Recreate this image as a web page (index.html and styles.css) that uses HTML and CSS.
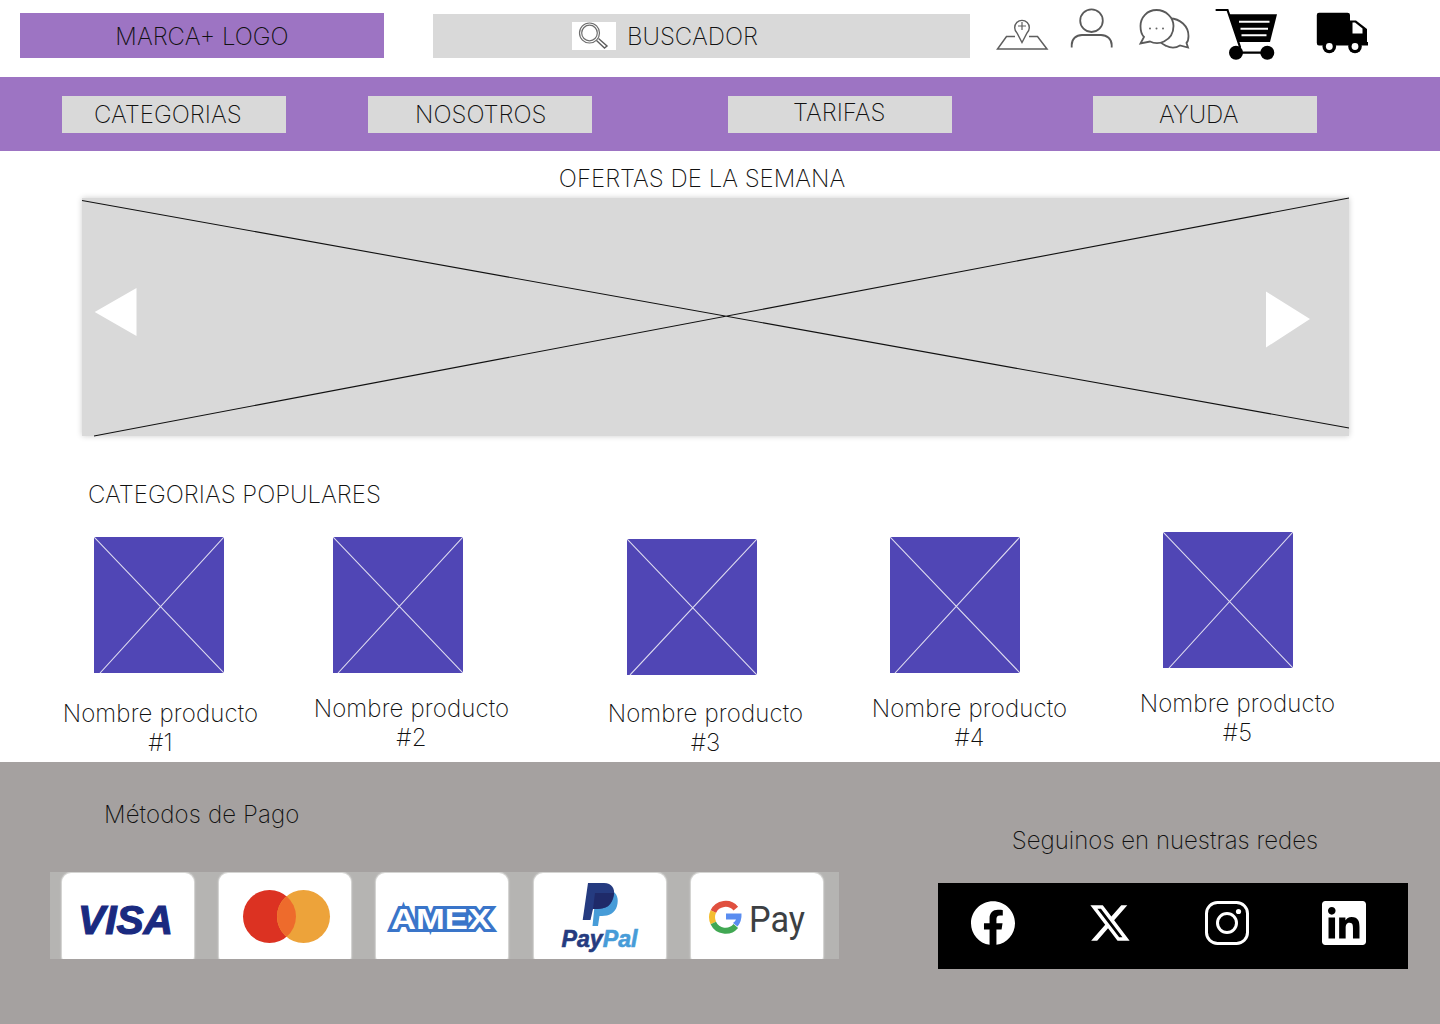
FILE: index.html
```html
<!DOCTYPE html>
<html lang="es">
<head>
<meta charset="utf-8">
<title>Tienda</title>
<link rel="stylesheet" href="styles.css">
</head>
<body>
<header class="header">
  <div class="brand">MARCA+ LOGO</div>
  <div class="search">
    <span class="search-icon">
      <svg width="44" height="28" viewBox="572 22 44 28" class="line-icon">
        <circle cx="589.5" cy="33" r="10" fill="none" stroke="#6e6e6e" stroke-width="1.2"/>
        <circle cx="589.5" cy="33" r="7.800" fill="none" stroke="#6e6e6e" stroke-width="1.200"/>
        <path d="M596.500 40.500 L604.500 48 L607 46 L598.500 38.500" fill="none" stroke="#5e5e5e" stroke-width="1.400"/>
      </svg>
    </span>
    <span class="search-label">BUSCADOR</span>
  </div>
  <div class="tools">
    <svg class="tool tool-map" viewBox="990 0 70 77">
      <path d="M1015 36.500 H1006.500 L997.500 49 H1047 L1037.500 36.500 H1029" fill="none" stroke="#5e5e5e" stroke-width="1.500"/>
      <path d="M1017 33 A7.300 7.300 0 1 1 1027 33 L1022 42.500 Z" fill="#fff" stroke="#5e5e5e" stroke-width="1.400"/>
      <path d="M1022 22 V30 M1018 26 H1026" stroke="#5e5e5e" stroke-width="1.200"/>
    </svg>
    <svg class="tool tool-person" viewBox="1060 0 70 77">
      <circle cx="1091.500" cy="20.700" r="11.300" fill="none" stroke="#5a5a5a" stroke-width="1.800"/>
      <path d="M1071.700 47.500 V45 C1071.700 39 1076 35 1082 35 H1101 C1107 35 1111.700 39 1111.700 45 V47.500" fill="none" stroke="#5a5a5a" stroke-width="1.800"/>
    </svg>
    <svg class="tool tool-chat" viewBox="1130 0 75 77">
      <path d="M1170 18.500 C1180 18.500 1188.500 26 1188.500 36 C1188.500 39 1187.500 42 1186.500 43 L1188 47.500 L1180 45.500 C1176 48 1171 48.300 1166 45.800 C1163 44.500 1160.500 42.500 1159 40.500" fill="#fff" stroke="#5a5a5a" stroke-width="1.800"/>
      <path d="M1156.500 10 C1147 10 1140.500 17.500 1140.500 26 C1140.500 31 1142 35 1144 37 L1140.500 43.500 L1150 41.500 C1154 43.500 1160 43.500 1164 41.500 C1170 38.500 1173.500 33 1173.500 26 C1173.500 17.500 1166 10 1156.500 10 Z" fill="#fff" stroke="#5a5a5a" stroke-width="1.800"/>
      <circle cx="1150" cy="28.500" r="1" fill="#666"/><circle cx="1156.500" cy="28.500" r="1" fill="#666"/><circle cx="1163" cy="28.500" r="1" fill="#666"/>
    </svg>
    <svg class="tool tool-cart" viewBox="1205 0 100 77">
      <path d="M1216.500 10 H1227.500 L1240 47 M1236 52.700 H1267" fill="none" stroke="#000" stroke-width="2.200" stroke-linecap="round"/>
      <path d="M1229 14.300 H1277 L1270 42 H1238 Z" fill="#000"/>
      <path d="M1239 21.700 H1269.500 M1240.500 28.700 H1268 M1241.500 35.300 H1266.500" stroke="#fff" stroke-width="2"/>
      <circle cx="1236" cy="52.700" r="7"/><circle cx="1267.300" cy="52.700" r="7"/>
    </svg>
    <svg class="tool tool-truck" viewBox="1305 0 70 77">
      <path d="M1319 12.800 H1347.500 Q1350 12.800 1350 15 V20.500 H1356 L1367 29 V42 H1368 V45.500 H1319 Q1316.800 45.500 1316.800 43 V15 Q1316.800 12.800 1319 12.800 Z" fill="#000"/>
      <path d="M1352.500 22.500 H1355 L1362.500 28.500 V33.500 H1352.500 Z" fill="#fff"/>
      <circle cx="1329.300" cy="46.500" r="6.800"/><circle cx="1329.300" cy="46.500" r="3.400" fill="#fff"/>
      <circle cx="1355" cy="46.500" r="6.800"/><circle cx="1355" cy="46.500" r="3.400" fill="#fff"/>
    </svg>
  </div>
</header>

<nav class="nav">
  <a class="nav-btn nav-cat">CATEGORIAS</a>
  <a class="nav-btn nav-nos">NOSOTROS</a>
  <a class="nav-btn nav-tar">TARIFAS</a>
  <a class="nav-btn nav-ayu">AYUDA</a>
</nav>

<main class="main">
  <h2 class="offers-title">OFERTAS DE LA SEMANA</h2>
  <section class="hero">
    <svg class="hero-art" viewBox="82 198 1267 238">
      <path d="M82 200.500 L1349 428 M94 436 L1349 198" stroke="#111" stroke-width="1.100" fill="none"/>
      <path d="M94.700 312 L136.500 288 V336 Z M1266 291.500 L1310 319 L1266 347.500 Z" fill="#fff"/>
    </svg>
  </section>
  <h2 class="popular-title">CATEGORIAS POPULARES</h2>
  <section class="products">
    <article class="product p1">
      <svg class="thumb" viewBox="0 0 130 136"><path d="M0 0 L130 136 M6 136 L130 0"/></svg>
      <p class="caption">Nombre producto<br>#1</p>
    </article>
    <article class="product p2">
      <svg class="thumb" viewBox="0 0 130 136"><path d="M0 0 L130 136 M5 136 L130 0"/></svg>
      <p class="caption">Nombre producto<br>#2</p>
    </article>
    <article class="product p3">
      <svg class="thumb" viewBox="0 0 130 136"><path d="M0 0 L130 136 M3 136 L130 0"/></svg>
      <p class="caption">Nombre producto<br>#3</p>
    </article>
    <article class="product p4">
      <svg class="thumb" viewBox="0 0 130 136"><path d="M0 0 L130 136 M5 136 L130 0"/></svg>
      <p class="caption">Nombre producto<br>#4</p>
    </article>
    <article class="product p5">
      <svg class="thumb" viewBox="0 0 130 136"><path d="M0 0 L130 136 M6 136 L130 0"/></svg>
      <p class="caption">Nombre producto<br>#5</p>
    </article>
  </section>
</main>

<footer class="footer">
  <div class="pay">
    <h3 class="pay-title">Métodos de Pago</h3>
    <div class="pay-strip">
      <div class="card">
        <svg viewBox="0 0 132 90" class="card-art"><text x="16" y="60.500" class="visa" textLength="95" lengthAdjust="spacingAndGlyphs">VISA</text></svg>
      </div>
      <div class="card">
        <svg viewBox="0 0 132 90" class="card-art">
          <circle cx="50.500" cy="43.500" r="26.500" fill="#dc3222"/>
          <circle cx="84.500" cy="43.500" r="26.500" fill="#eda33a"/>
          <path d="M67.500 23.200 A26.500 26.500 0 0 1 67.500 63.800 A26.500 26.500 0 0 1 67.500 23.200 Z" fill="#ee6b2c"/>
        </svg>
      </div>
      <div class="card">
        <svg viewBox="0 0 132 90" class="card-art"><text x="15" y="56" class="amex" textLength="100" lengthAdjust="spacingAndGlyphs">AMEX</text></svg>
      </div>
      <div class="card card-shift">
        <svg viewBox="0 0 132 90" class="card-art">
          <path d="M62 18 H78 C83 20 85 26 83 33 C81 40 75 43 68 43 H65.500 L64 53 H58.500 Z" fill="#479cd8"/>
          <path d="M54 10 H70 C78 10 81 16 80 22 C78 33 72 36 62 36 H59 L56.500 47 H48.700 Z" fill="#253b80"/>
          <path d="M61 20 H80 C78 33 72 36 62 36 H59 Z" fill="#1f2a69"/>
          <text x="27.500" y="74" class="paypal" textLength="76" lengthAdjust="spacingAndGlyphs"><tspan class="pp-dark">Pay</tspan><tspan class="pp-light">Pal</tspan></text>
        </svg>
      </div>
      <div class="card">
        <svg viewBox="0 0 132 90" class="card-art">
          <path d="M44.800 35.600 A13.500 13.500 0 0 0 22.300 38.600" fill="none" stroke="#e0503f" stroke-width="6"/>
          <path d="M22.300 38.600 A13.500 13.500 0 0 0 22.300 50" fill="none" stroke="#f4bd30" stroke-width="6"/>
          <path d="M22.300 50 A13.500 13.500 0 0 0 44.800 53" fill="none" stroke="#41a853" stroke-width="6"/>
          <path d="M35 40.500 H50.500 Q51 48 46.500 53.500 L42 50 Q44.500 48 45 46.500 H35 Z" fill="#5a8df0"/>
          <text x="58" y="59" class="gpay" textLength="56" lengthAdjust="spacingAndGlyphs">Pay</text>
        </svg>
      </div>
    </div>
  </div>
  <div class="social">
    <h3 class="social-title">Seguinos en nuestras redes</h3>
    <div class="social-box">
      <svg class="social-icon" viewBox="0 0 24 24"><path fill="#fff" d="M24 12.073c0-6.627-5.373-12-12-12s-12 5.373-12 12c0 5.990 4.388 10.954 10.125 11.854v-8.385H7.078v-3.470h3.047V9.430c0-3.007 1.792-4.669 4.533-4.669 1.312 0 2.686.235 2.686.235v2.953H15.830c-1.491 0-1.956.925-1.956 1.874v2.250h3.328l-.532 3.470h-2.796v8.385C19.612 23.027 24 18.062 24 12.073z"/></svg>
      <svg class="social-icon" viewBox="-1.450 -1.450 26.900 26.900"><path fill="#fff" d="M18.901 1.153h3.680l-8.040 9.190L24 22.846h-7.406l-5.800-7.584-6.638 7.584H.474l8.600-9.830L0 1.154h7.594l5.243 6.932ZM17.610 20.644h2.039L6.486 3.240H4.298Z"/></svg>
      <svg class="social-icon" viewBox="0 0 44 44">
        <rect x="1.500" y="1.500" width="41" height="41" rx="11" fill="none" stroke="#fff" stroke-width="3"/>
        <circle cx="22" cy="22" r="9.500" fill="none" stroke="#fff" stroke-width="3"/>
        <circle cx="33.500" cy="10.500" r="2.600" fill="#fff"/>
      </svg>
      <svg class="social-icon" viewBox="0 0 24 24"><path fill="#fff" d="M20.447 20.452h-3.554v-5.569c0-1.328-.027-3.037-1.852-3.037-1.853 0-2.136 1.445-2.136 2.939v5.667H9.351V9h3.414v1.561h.046c.477-.9 1.637-1.850 3.370-1.850 3.601 0 4.267 2.370 4.267 5.455v6.286zM5.337 7.433c-1.144 0-2.063-.926-2.063-2.065 0-1.138.920-2.063 2.063-2.063 1.140 0 2.064.925 2.064 2.063 0 1.139-.925 2.065-2.064 2.065zm1.782 13.019H3.555V9h3.564v11.452zM22.225 0H1.771C.792 0 0 .774 0 1.729v20.542C0 23.227.792 24 1.771 24h20.451C23.200 24 24 23.227 24 22.271V1.729C24 .774 23.200 0 22.222 0h.003z"/></svg>
    </div>
  </div>
</footer>
</body>
</html>
```
FILE: styles.css
```css
* { box-sizing: border-box; }
html, body { margin: 0; padding: 0; }
body {
  width: 1440px;
  height: 1024px;
  overflow: hidden;
  display: flex;
  flex-direction: column;
  background: #fff;
  color: #111;
  font-family: Inter, "Liberation Sans", sans-serif;
  font-weight: 200;
  font-size: 24px;
  line-height: 29px;
}
h2, h3, p { margin: 0; font: inherit; }

/* header */
.header { height: 77px; display: flex; align-items: flex-start; padding-left: 20px; }
.brand {
  width: 364px; height: 45px; margin-top: 13px;
  background: #9d74c3;
  text-align: center; line-height: 47px;
}
.search {
  width: 537px; height: 44px; margin: 14px 0 0 49px;
  background: #d9d9d9;
  display: flex; align-items: center;
  padding-left: 139px;
}
.search-icon { width: 44px; height: 28px; background: #fff; display: block; }
.line-icon { display: block; }
.search-label { margin-left: 11px; }
.tools { display: flex; margin-left: 20px; }
.tool { display: block; height: 77px; fill: #000; }
.tool-map, .tool-person { width: 70px; }
.tool-chat { width: 75px; }
.tool-cart { width: 100px; }
.tool-truck { width: 70px; }

/* nav */
.nav { height: 74px; background: #9d74c3; display: flex; align-items: flex-start; padding: 19px 0 0 62px; }
.nav-btn { display: block; width: 224px; height: 37px; background: #d9d9d9; line-height: 37px; }
.nav-cat { padding-left: 32px; }
.nav-nos { padding-left: 47px; margin-left: 82px; }
.nav-tar { padding-left: 65px; margin-left: 136px; line-height: 33px; }
.nav-ayu { padding-left: 66px; margin-left: 141px; }

/* main */
.main { flex: 1; display: flex; flex-direction: column; }
.offers-title { width: 1404px; text-align: center; padding-top: 13px; height: 47px; }
.hero {
  position: relative;
  width: 1267px; height: 238px; margin-left: 82px;
  background: #d9d9d9;
  box-shadow: 0 0 6px rgba(0, 0, 0, .2);
}
.hero-art { position: absolute; inset: 0; width: 100%; height: 100%; overflow: visible; }
.popular-title { margin: 44px 0 0 88px; }
.products { display: flex; margin-top: 23px; padding-left: 55px; align-items: flex-start; }
.product { width: 211px; display: flex; flex-direction: column; }
.thumb { display: block; width: 130px; height: 136px; background: #5046b5; }
.thumb path { stroke: #dedcf0; stroke-width: 1.1; fill: none; }
.caption { text-align: center; letter-spacing: .13px; }
.p1 { padding-top: 5px; }
.p1 .thumb { margin: 0 0 26px 39px; }
.p2 { padding-top: 5px; margin-left: 40px; }
.p2 .thumb { margin: 0 0 21px 27px; }
.p3 { padding-top: 7px; margin-left: 83px; }
.p3 .thumb { margin: 0 0 24px 27px; }
.p4 { padding-top: 5px; margin-left: 53px; }
.p4 .thumb { margin: 0 0 21px 26px; }
.p5 { margin-left: 57px; }
.p5 .thumb { margin: 0 0 21px 31px; }

/* footer */
.footer { height: 262px; background: #a5a1a0; display: flex; }
.pay { width: 789px; margin-left: 50px; padding-top: 38px; }
.pay-title { margin-left: 54px; height: 72px; letter-spacing: .13px; }
.pay-strip {
  height: 87px; background: #b5b4b2; overflow: hidden;
  display: flex; gap: 25px; padding: 1px 0 0 12px;
}
.card {
  flex: none; width: 132px; height: 92px;
  background: #fff; border-radius: 9px;
  box-shadow: 0 0 0 1px #d4d4d2, 0 0 2px 1px #cfcfcd;
}
.card-shift { margin-left: 1px; }
.card-art { display: block; width: 132px; height: 90px; }
.visa { font: italic 700 40px "Liberation Sans", sans-serif; fill: #1a2a80; stroke: #1a2a80; stroke-width: 1.2; }
.amex {
  font: 700 30px "Liberation Sans", sans-serif;
  fill: #fff; stroke: #3a75c9; stroke-width: 6; paint-order: stroke;
}
.paypal { font: italic 700 23px "Liberation Sans", sans-serif; stroke-width: .6; }
.pp-dark { fill: #253b80; stroke: #253b80; }
.pp-light { fill: #479cd8; stroke: #479cd8; }
.gpay { font: 400 37px Roboto, sans-serif; fill: #3c4043; }
.social { width: 470px; margin-left: 99px; padding-top: 64px; }
.social-title { text-align: center; padding-right: 16px; height: 57px; }
.social-box {
  height: 86px; background: #000;
  display: flex; align-items: flex-start; gap: 73px; padding: 18px 0 0 33px;
}
.social-icon { display: block; width: 44px; height: 44px; }
```
